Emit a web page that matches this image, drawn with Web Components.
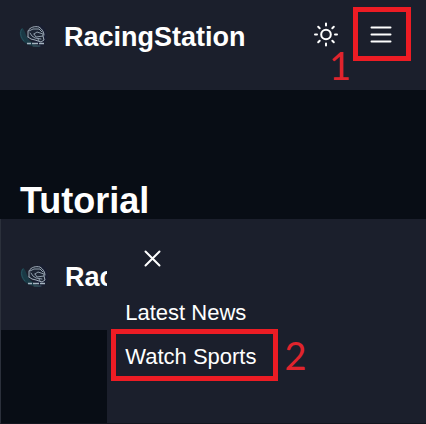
<!DOCTYPE html>
<html lang="en">
<head>
<meta charset="utf-8">
<title>RacingStation tutorial</title>
<style>
  html, body { margin: 0; min-height: 100vh; }
  body { background: #080d15; color: #fff; font-family: "Liberation Sans", Arial, sans-serif; }
</style>
</head>
<body>
<tutorial-page></tutorial-page>

<script>
const define = (name, html) => {
  const template = document.createElement('template');
  template.innerHTML = html;
  customElements.define(name, class extends HTMLElement {
    constructor() {
      super();
      this.attachShadow({ mode: 'open' }).append(template.content.cloneNode(true));
    }
  });
};

define('helmet-logo', `
  <style>:host { display: block; flex: none; } svg { display: block; }</style>
  <svg width="30" height="30" viewBox="0 0 30 30" fill="none" stroke-linecap="round" stroke-linejoin="round" aria-hidden="true">
    <defs><radialGradient id="glow"><stop offset="0" stop-color="#10183c"/><stop offset="1" stop-color="#10183c" stop-opacity="0"/></radialGradient></defs>
    <ellipse cx="21" cy="14" rx="9" ry="13" fill="url(#glow)"/>
    <path d="M4 6C1 8 1 14 4 18C7 22 13 25 22 25C15 22 10 18 8 13C7 10 6 7 4 6Z" fill="#1a3945"/>
    <path d="M4 7C1 10 3 16 6 19" stroke="#295560"/>
    <path d="M10 16L10 9C12 5 17 4 21 5C24 7 26 10 26 13L26 18L23 20L17 18L12 17Z" fill="#1c2433"/>
    <path d="M10 15L10 9C12 5 17 4 21 5C24 7 26 10 26 13M10 15L13 17L17 18L23 20L26 18L25 14" stroke="#a3afbb"/>
    <path d="M11 9L15 7L21 7L24 10M16 12L19 10L25 12L25 14L18 15L16 12M12 11L14 14L17 16L23 17M20 17L21 19" stroke="#909eac"/>
    <path d="M9 21.5H13M14 21.5H20M21 21.5H26" stroke="#a4b3bf" stroke-width="1.5" stroke-linecap="butt"/>
    <path d="M15 24H22" stroke="#3e5964"/>
  </svg>`);

define('site-brand', `
  <style>
    :host { display: flex; align-items: center; gap: 16px; min-width: 0; }
    a { color: inherit; text-decoration: none; font-weight: 700; font-size: 27px; line-height: 32px; white-space: nowrap; }
  </style>
  <helmet-logo></helmet-logo>
  <a href="#home"><slot></slot></a>`);

define('icon-button', `
  <style>
    :host { display: block; flex: none; }
    button { display: block; margin: 0; padding: 0; border: 0; background: none; color: inherit; cursor: pointer; }
    ::slotted(svg) { display: block; }
  </style>
  <button type="button"><slot></slot></button>`);

define('highlight-box', `
  <style>:host { display: block; box-sizing: border-box; border: 5px solid #ed1c24; }</style>
  <slot></slot>`);

define('step-number', `
  <style>:host { display: block; color: #e0242d; font-family: Lato, "Open Sans", sans-serif; font-size: 38px; line-height: 38px; }</style>
  <slot></slot>`);

define('menu-link', `
  <style>
    :host { display: block; font-size: 22px; line-height: 26px; white-space: nowrap; }
    a { color: inherit; text-decoration: none; }
  </style>
  <a href="#"><slot></slot></a>`);

define('site-header', `
  <style>
    :host { display: flex; align-items: center; padding: 7px 15px 29px 18px; background: #1b1f2c; }
    site-brand { flex: 1; padding-top: 6px; }
    .target { position: relative; margin-left: 14px; }
    highlight-box { padding: 10px 13px 10px 11px; }
    step-number { position: absolute; right: 60px; top: 39px; }
  </style>
  <site-brand>RacingStation</site-brand>
  <icon-button>
    <svg width="26" height="26" viewBox="0 0 26 26" fill="none" stroke="#fff" stroke-width="2" stroke-linecap="round" role="img" aria-label="Toggle theme">
      <circle cx="13" cy="13.5" r="4.8"/>
      <path d="M13 2.5V4.5M13 22.5V24.5M2 13.5H4M22 13.5H24M5.2 5.7L6.7 7.2M19.3 19.8L20.8 21.3M5.2 21.3L6.7 19.8M19.3 7.2L20.8 5.7"/>
    </svg>
  </icon-button>
  <div class="target">
    <highlight-box>
      <icon-button>
        <svg width="24" height="24" viewBox="0 0 24 24" fill="none" stroke="#fff" stroke-width="2" stroke-linecap="round" role="img" aria-label="Open menu">
          <path d="M2.5 5.5H21.5M2.5 12.5H21.5M2.5 19.5H21.5"/>
        </svg>
      </icon-button>
    </highlight-box>
    <step-number>1</step-number>
  </div>`);

define('menu-drawer', `
  <style>
    :host { display: block; padding: 27px 4px; background: #1b1f2c; }
    .close { display: flex; padding-left: 29px; margin-bottom: 30px; }
    .plain { padding-left: 14px; margin-bottom: 3px; }
    .row { display: flex; align-items: center; gap: 6px; }
    highlight-box { padding: 10px 17px 6px 9px; }
  </style>
  <icon-button class="close">
    <svg width="24" height="24" viewBox="0 0 24 24" fill="none" stroke="#fff" stroke-width="2" stroke-linecap="round" role="img" aria-label="Close menu">
      <path d="M5.5 5.5L19.5 19.5M19.5 5.5L5.5 19.5"/>
    </svg>
  </icon-button>
  <nav>
    <menu-link class="plain">Latest News</menu-link>
    <div class="row">
      <highlight-box><menu-link>Watch Sports</menu-link></highlight-box>
      <step-number>2</step-number>
    </div>
  </nav>`);

define('menu-preview', `
  <style>
    :host { display: grid; grid-template-columns: 25% 1fr; box-sizing: border-box; border-left: 1px solid #2b303b; border-bottom: 1px solid #12151e; }
    .page { overflow: hidden; background: #080d15; }
    .bar { padding: 42px 0 37px 18px; background: #1b1f2c; }
  </style>
  <div class="page"><div class="bar"><site-brand>RacingStation</site-brand></div></div>
  <menu-drawer></menu-drawer>`);

define('tutorial-page', `
  <style>
    :host { display: flex; flex-direction: column; min-height: 100vh; }
    main { display: flex; flex-direction: column; flex: 1; }
    h1 { margin: 0; padding: 92px 20px 0; font-size: 36px; line-height: 37px; }
    menu-preview { flex: 1; }
  </style>
  <site-header></site-header>
  <main>
    <h1>Tutorial</h1>
    <menu-preview></menu-preview>
  </main>`);
</script>
</body>
</html>
